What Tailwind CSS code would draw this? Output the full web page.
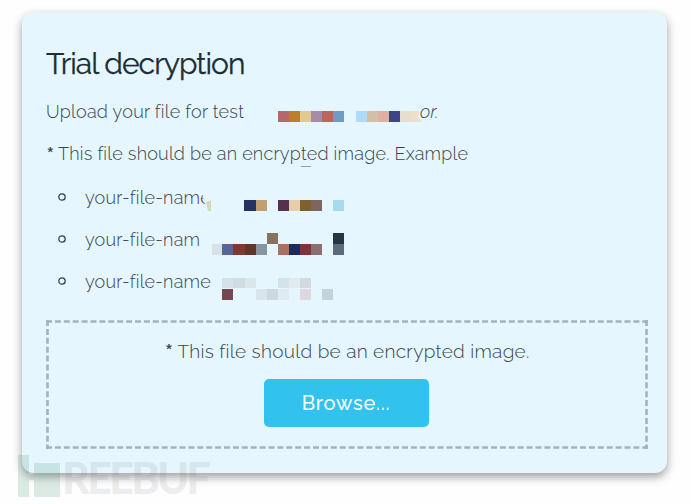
<!DOCTYPE html>
<html lang="en">
<head>
<meta charset="utf-8">
<title>Trial decryption</title>
<script src="https://cdn.jsdelivr.net/npm/@tailwindcss/browser@4"></script>
</head>
<body class="relative h-[504px] w-[690px] overflow-hidden bg-[#fefefe] pl-[22px] pt-3 font-['Raleway','Lato',sans-serif] text-[#38444b]">
<main class="flex h-[461px] w-[645px] flex-col rounded-xl bg-[#e5f6fe] px-6 shadow-[0_4px_10px_rgba(0,0,0,0.38)]">
  <h1 class="mt-8 h-10 whitespace-nowrap text-[30px] font-normal leading-10 tracking-[-0.95px] text-[#202c33] [-webkit-text-stroke:0.25px_#202c33]"><span>Trial decryption</span></h1>
  <p class="mt-[14px] flex h-7 whitespace-nowrap text-[18px] font-light leading-7"><span class="w-[374px] tracking-[0.26px]">Upload your file for test</span><i class="tracking-[0.3px]">or.</i></p>
  <p class="mt-[14px] flex h-7 whitespace-nowrap text-[18px] font-light leading-7 tracking-[0.23px]"><span class="w-3 pt-[3px] text-[26px] font-medium">*</span><span>This file should be an encrypted image. Example</span></p>
  <ul class="mt-[16px] flex flex-col gap-[14px] pl-3 text-[18px] font-light leading-7 tracking-[0.22px]">
    <li class="flex h-7 whitespace-nowrap"><svg class="mr-[19px] mt-[9px] size-2" viewBox="0 0 8 8" fill="none" stroke="#35444c" stroke-width="1.3"><circle cx="4" cy="4" r="3.2"/></svg><span>your-file-name</span></li>
    <li class="flex h-7 whitespace-nowrap"><svg class="mr-[19px] mt-[9px] size-2" viewBox="0 0 8 8" fill="none" stroke="#35444c" stroke-width="1.3"><circle cx="4" cy="4" r="3.2"/></svg><span>your-file-nam</span></li>
    <li class="flex h-7 whitespace-nowrap"><svg class="mr-[19px] mt-[9px] size-2" viewBox="0 0 8 8" fill="none" stroke="#35444c" stroke-width="1.3"><circle cx="4" cy="4" r="3.2"/></svg><span>your-file-name</span></li>
  </ul>
  <section class="relative mt-[24px] flex h-[129px] w-[602px] shrink-0 flex-col items-center">
    <svg class="absolute inset-0" width="602" height="129" fill="none" stroke="#a5b2ba" stroke-width="2.6"><path d="M0 1.5H602M0 127.5H602M1.5 0V129M600.5 0V129" stroke-dasharray="6 2.9"/></svg>
    <p class="mt-[17px] flex h-7 whitespace-nowrap text-[19px] font-light leading-7 tracking-[0.3px]"><span class="w-[13px] pt-[3px] text-[27px] font-medium">*</span><span>This file should be an encrypted image.</span></p>
    <button class="mr-[2px] mt-[14px] h-12 w-[165px] rounded-[5px] bg-[#31c2ee] text-[20px] font-medium tracking-[0.75px] text-white">Browse...</button>
  </section>
</main>
<!-- Pixelated masks over private text -->
<svg class="absolute left-0 top-0" width="690" height="504" viewBox="0 0 690 504">
  <g>
    <path fill="#b5686a" d="M278 111h11v11h-11z"/><path fill="#c07d2a" d="M289 111h11v11h-11z"/><path fill="#e0cb90" d="M300 111h11v11h-11z"/><path fill="#a78aa8" d="M311 111h11v11h-11z"/><path fill="#bb6560" d="M322 111h11v11h-11z"/><path fill="#6d9dc5" d="M333 111h11v11h-11z"/>
    <path fill="#b0dbf8" d="M356 111h11v11h-11z"/><path fill="#d2bfa8" d="M367 111h11v11h-11z"/><path fill="#dfb0a0" d="M378 111h11v11h-11z"/><path fill="#3d4588" d="M389 111h11v11h-11z"/><path fill="#e5dfd0" d="M400 111h11v11h-11z"/><path fill="#ece0c8" d="M411 111h8l-1 6 3 3v2h-10z"/>
  </g>
  <path fill="#93a2aa" d="M301 166h10v1h-10z"/>
  <g>
    <path fill="#e5f6fe" d="M203 190h9v7l-1 14h-5l-1-9-2-4z"/>
    <path fill="#d5dcb5" d="M206 202l5-2v11h-3z"/><path fill="#28305f" d="M244 200h12v11h-12z"/><path fill="#c0a070" d="M256 200h11v11h-11z"/><path fill="#55304f" d="M278 200h11v11h-11z"/><path fill="#e5cfa5" d="M289 200h11v11h-11z"/><path fill="#80602f" d="M300 200h11v11h-11z"/><path fill="#7d6560" d="M311 200h11v11h-11z"/><path fill="#a8d8ee" d="M333 200h11v11h-11z"/>
  </g>
  <g>
    <path fill="#85735f" d="M267 233h11v11h-11z"/><path fill="#273446" d="M333 233h11v11h-11z"/>
    <path fill="#d8e2e6" d="M212 244h10v11h-10z"/><path fill="#5a6595" d="M222 244h11v11h-11z"/><path fill="#7c3a30" d="M233 244h12v11h-12z"/><path fill="#5f3628" d="M245 244h11v11h-11z"/><path fill="#87969c" d="M256 244h11v11h-11z"/><path fill="#a87263" d="M278 244h11v11h-11z"/><path fill="#1f2a5c" d="M289 244h11v11h-11z"/><path fill="#7d343c" d="M300 244h11v11h-11z"/><path fill="#8c6f70" d="M311 244h11v11h-11z"/><path fill="#5b6b7b" d="M333 244h11v11h-11z"/>
  </g>
  <g>
    <path fill="#d6e2e8" d="M222 278h11v10h-11z"/><path fill="#cfdde2" d="M233 278h12v10h-12z"/><path fill="#d9e6ea" d="M245 278h11v10h-11z"/><path fill="#d6e3e6" d="M278 278h11v10h-11z"/><path fill="#dfebef" d="M289 278h11v10h-11z"/><path fill="#d5d8de" d="M300 278h11v10h-11z"/>
    <path fill="#754850" d="M222 289h11v11h-11z"/><path fill="#d9e5e8" d="M256 289h11v11h-11z"/><path fill="#cbd9dc" d="M267 289h11v11h-11z"/><path fill="#e0ebef" d="M278 289h11v11h-11z"/><path fill="#e0d8df" d="M300 289h11v11h-11z"/><path fill="#c3d3da" d="M322 289h11v11h-11z"/>
  </g>
</svg>
<!-- Site watermark -->
<div class="absolute left-[18px] top-[455px] flex h-[43px]">
  <svg width="43" height="43" fill="#4f9f7b" fill-opacity=".2"><path d="M0 0h11v42H0zM16 8h26v34H16zM11 20h5v5h-5z"/></svg>
  <span class="ml-px mt-px font-['Lato',sans-serif] text-[43px] font-black leading-[43px] tracking-[-2.7px] text-[#707a80]/15">REEBUF</span>
</div>
</body>
</html>
